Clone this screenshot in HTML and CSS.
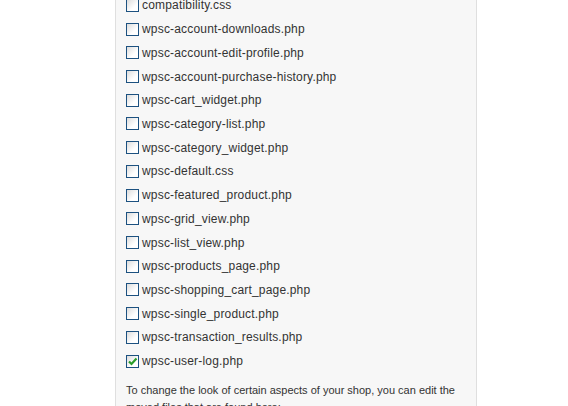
FILE: index.html
```html
<!DOCTYPE html>
<html>
<head>
<meta charset="utf-8">
<link rel="stylesheet" href="styles.css">
</head>
<body>
<div class="page">
  <div class="panel">
    <ul class="files">
      <li><span class="cb"></span>compatibility.css</li>
      <li><span class="cb"></span>wpsc-account-downloads.php</li>
      <li><span class="cb"></span>wpsc-account-edit-profile.php</li>
      <li><span class="cb"></span>wpsc-account-purchase-history.php</li>
      <li><span class="cb"></span>wpsc-cart_widget.php</li>
      <li><span class="cb"></span>wpsc-category-list.php</li>
      <li><span class="cb"></span>wpsc-category_widget.php</li>
      <li><span class="cb"></span>wpsc-default.css</li>
      <li><span class="cb"></span>wpsc-featured_product.php</li>
      <li><span class="cb"></span>wpsc-grid_view.php</li>
      <li><span class="cb"></span>wpsc-list_view.php</li>
      <li><span class="cb"></span>wpsc-products_page.php</li>
      <li><span class="cb"></span>wpsc-shopping_cart_page.php</li>
      <li><span class="cb"></span>wpsc-single_product.php</li>
      <li><span class="cb"></span>wpsc-transaction_results.php</li>
      <li><span class="cb checked"><svg viewBox="0 0 11 11" width="11" height="11"><path d="M2 5.5 L4.5 8 L9.5 2.5" fill="none" stroke="#2a9d2a" stroke-width="2.2"/></svg></span>wpsc-user-log.php</li>
    </ul>
    <p class="note">To change the look of certain aspects of your shop, you can edit the moved files that are found here:</p>
  </div>
</div>
</body>
</html>
```
FILE: styles.css
```css
html, body { margin: 0; padding: 0; background: #fff; }
body { font-family: "Liberation Sans", Arial, sans-serif; font-size: 12px; color: #333; }
.page { padding-left: 115px; }
.panel {
  width: 362px;
  height: 420px;
  border-left: 1px solid #dfdfdf;
  border-right: 1px solid #dfdfdf;
  background: #f7f7f7;
  margin-top: -6.5px;
  padding-left: 10px;
  box-sizing: border-box;
}
.files { list-style: none; margin: 0; padding: 0; }
.files li { height: 23.73px; display: flex; align-items: center; white-space: nowrap; letter-spacing: 0.18px; }
.cb {
  width: 11px; height: 11px;
  border: 1px solid #1c5180;
  background: linear-gradient(135deg, #dcdcdc, #ffffff 65%);
  margin-right: 3px;
  flex: none;
  display: flex; align-items: center; justify-content: center;
}
.cb svg { display: block; }
.note { margin: 9px 0 0 0; line-height: 17px; font-size: 11px; letter-spacing: 0; padding-right: 2px; }
```
